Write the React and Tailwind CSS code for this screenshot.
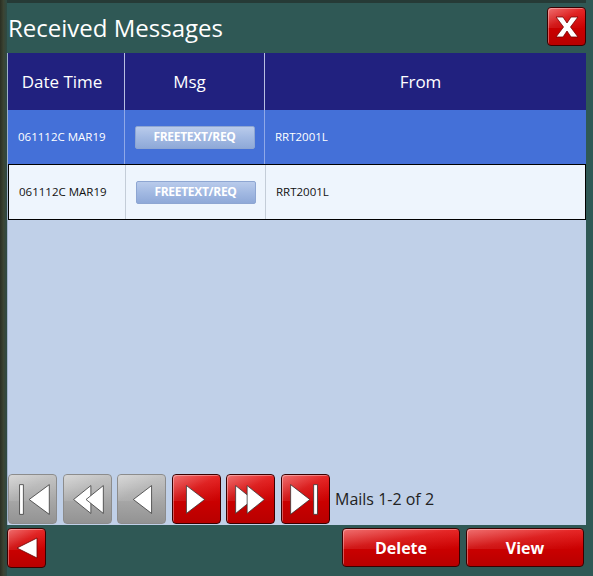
import React from 'react'

const FONT = { fontFamily: '"Open Sans", "Noto Sans", sans-serif' }

// glossy red / grey button shells
const redBtn =
  'relative overflow-hidden rounded-[4px] border border-[#3a0000] bg-gradient-to-b from-[#e41010] via-[#cc0000] to-[#b80000] shadow-[inset_1px_1px_0_rgba(255,255,255,0.35)]'
const greyBtn =
  'relative overflow-hidden rounded-[4px] border border-[#8c8c8c] bg-gradient-to-b from-[#bdbdbd] via-[#a8a8a8] to-[#939393]'

function Gloss() {
  return (
    <span className="pointer-events-none absolute left-0 top-0 h-[55%] w-full bg-gradient-to-br from-white/40 via-white/10 to-transparent" />
  )
}

// pager glyphs: white shapes with a thin dark edge
function PagerIcon({ kind }) {
  const s = { fill: '#fff', stroke: '#333', strokeWidth: 0.8, strokeLinejoin: 'round' }
  return (
    <svg width="49" height="49" viewBox="0 0 49 49" className="relative">
      {kind === 'first' && (
        <>
          <rect x="11" y="9" width="4" height="31" {...s} />
          <polygon points="42,9 42,40 21,24.5" {...s} />
        </>
      )}
      {kind === 'rew' && (
        <>
          <polygon points="28,10 28,39 10,24.5" {...s} />
          <polygon points="41,10 41,39 23,24.5" {...s} />
        </>
      )}
      {kind === 'prev' && <polygon points="35,10 35,39 16,24.5" {...s} />}
      {kind === 'next' && <polygon points="14,10 14,39 33,24.5" {...s} />}
      {kind === 'ff' && (
        <>
          <polygon points="9,10 9,39 27,24.5" {...s} />
          <polygon points="21,10 21,39 39,24.5" {...s} />
        </>
      )}
      {kind === 'last' && (
        <>
          <polygon points="9,9 9,40 29,24.5" {...s} />
          <rect x="33" y="9" width="4" height="31" {...s} />
        </>
      )}
    </svg>
  )
}

function PagerButton({ kind, enabled }) {
  return (
    <button className={`${enabled ? redBtn : greyBtn} h-[50px] w-[49px] flex items-center justify-center`}>
      <Gloss />
      <PagerIcon kind={kind} />
    </button>
  )
}

function MsgChip() {
  return (
    <div className="h-[23px] w-[120px] rounded-[2px] border border-[#8ea6d2] bg-gradient-to-b from-[#b9cbeb] via-[#a2b9e2] to-[#8fa9d8] flex items-center justify-center text-[12px] font-bold text-white tracking-tight">
      FREETEXT/REQ
    </div>
  )
}

const rows = [
  { dt: '061112C MAR19', from: 'RRT2001L', selected: true },
  { dt: '061112C MAR19', from: 'RRT2001L', selected: false },
]

export default function App() {
  return (
    <div style={FONT} className="flex h-[576px] w-[593px] overflow-hidden bg-[#2f5855]">
      {/* dark frame strip on the left */}
      <div className="w-[7px] shrink-0 bg-gradient-to-r from-[#2a2e22] via-[#3b4433] to-[#2c4a44]" />

      <div className="flex flex-1 flex-col pr-[7px]">
        {/* title bar */}
        <div className="flex h-[53px] items-start justify-between border-t-[3px] border-[#263a36]">
          <h1 className="mt-[10px] pl-[1px] text-[24px] leading-[30px] text-white">Received Messages</h1>
          <button className={`${redBtn} mt-[4px] h-[39px] w-[39px] flex items-center justify-center`}>
            <Gloss />
            <svg width="26" height="24" viewBox="0 0 26 24" className="relative">
              <path
                d="M2 2 H9 L13 8 L17 2 H24 L16.5 12 L24 22 H17 L13 16 L9 22 H2 L9.5 12 Z"
                fill="#fff"
                stroke="#7a0000"
                strokeWidth="0.8"
                strokeLinejoin="round"
              />
            </svg>
          </button>
        </div>

        {/* table panel */}
        <div className="flex h-[472px] flex-col border-l border-[#9fb0c8] bg-[#c0d0e8]">
          <div className="grid h-[57px] grid-cols-[117px_140px_1fr] bg-[#21217f] text-[17px] text-white">
            <div className="flex items-center justify-center pr-[8px] border-r border-[#b8bee0]">Date Time</div>
            <div className="flex items-center justify-center pr-[10px] border-r border-[#b8bee0]">Msg</div>
            <div className="flex items-center justify-center pr-[10px]">From</div>
          </div>

          {rows.map((r, i) => (
            <div
              key={i}
              className={`grid grid-cols-[117px_140px_1fr] text-[11.5px] ${
                r.selected
                  ? 'h-[54px] bg-[#4470d8] text-white'
                  : 'h-[56px] border border-black bg-[#eef5fd] text-[#111]'
              }`}
            >
              <div className={`flex items-center pl-[10px] border-r ${r.selected ? 'border-[#8fa8e8]' : 'border-[#c4cdd8]'}`}>
                {r.dt}
              </div>
              <div className={`flex items-center justify-center border-r ${r.selected ? 'border-[#8fa8e8]' : 'border-[#c4cdd8]'}`}>
                <MsgChip />
              </div>
              <div className="flex items-center pl-[10px]">{r.from}</div>
            </div>
          ))}

          <div className="flex-1" />

          {/* pager */}
          <div className="flex items-center gap-[5.5px] pb-[1px]">
            <PagerButton kind="first" />
            <PagerButton kind="rew" />
            <PagerButton kind="prev" />
            <PagerButton kind="next" enabled />
            <PagerButton kind="ff" enabled />
            <PagerButton kind="last" enabled />
            <span className="text-[16px] text-[#222]">Mails 1-2 of 2</span>
          </div>
        </div>

        {/* bottom actions */}
        <div className="mt-[3px] flex items-start">
          <button className={`${redBtn} h-[40px] w-[39px] flex items-center justify-center`}>
            <Gloss />
            <svg width="26" height="26" viewBox="0 0 26 26" className="relative">
              <polygon points="23,3 23,23 3,13" fill="#fff" stroke="#6a0000" strokeWidth="0.8" strokeLinejoin="round" />
            </svg>
          </button>
          <div className="ml-auto flex gap-[6px] pr-[2px]">
            <button className={`${redBtn} h-[39px] w-[118px] text-[16px] font-bold text-white`}>
              <Gloss />
              <span className="relative">Delete</span>
            </button>
            <button className={`${redBtn} h-[39px] w-[118px] text-[16px] font-bold text-white`}>
              <Gloss />
              <span className="relative">View</span>
            </button>
          </div>
        </div>
      </div>
    </div>
  )
}
